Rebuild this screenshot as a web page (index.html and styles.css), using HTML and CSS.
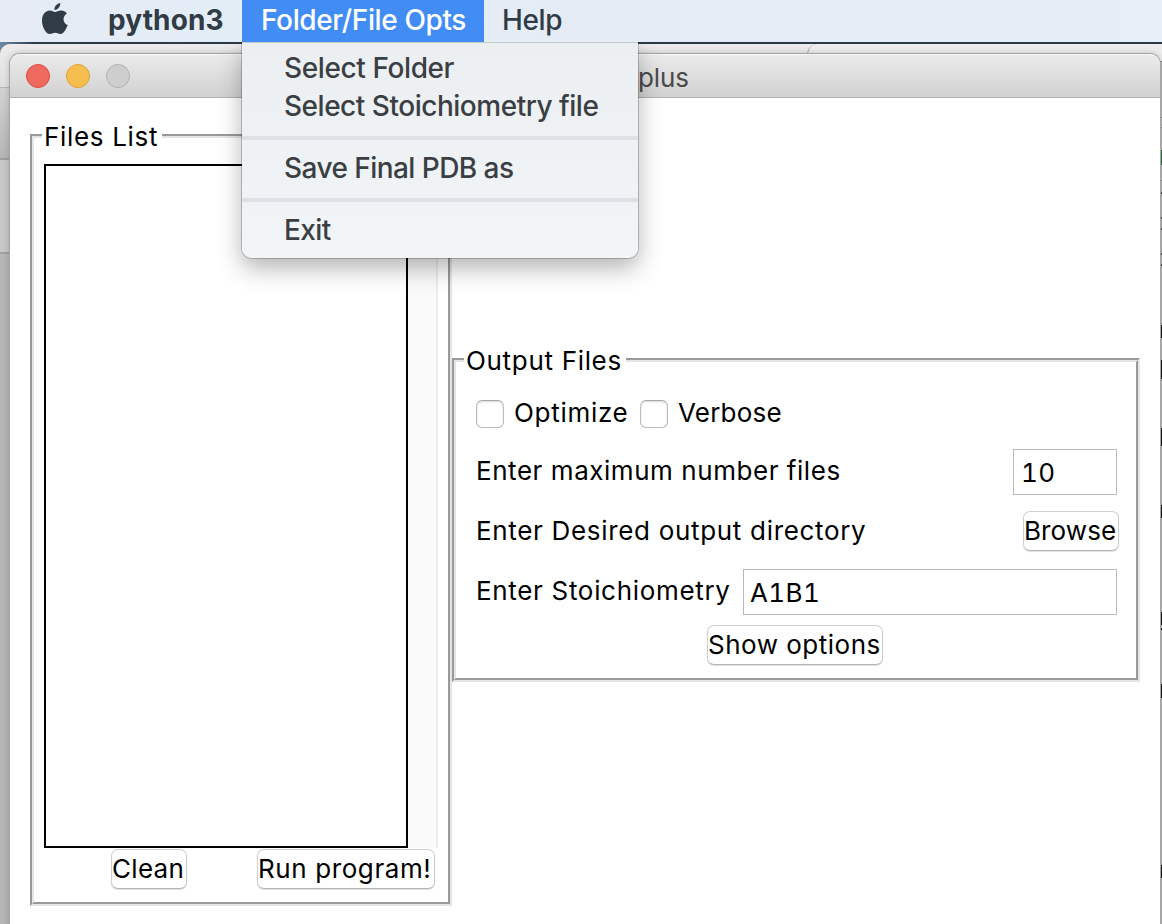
FILE: index.html
```
<!DOCTYPE html>
<html lang="en">
<head>
<meta charset="utf-8">
<title>plus</title>
<link rel="stylesheet" href="styles.css">
</head>
<body>
<div class="desktop">
  <header class="menubar">
    <svg class="apple" viewBox="0 0 26 32" width="26" height="32"><path d="M18.3 0C18.6 3.6 15.6 7 12.4 7 12.1 3.5 15.2.3 18.3 0ZM13 9C14.500 9 16.300 7.400 19 7.400 21.500 7.400 23.600 8.600 24.900 10.500 20 13.400 20.700 20.200 25.700 22.100 24.500 25.500 21.700 31 18.700 31 16.500 31 15.700 29.700 13.200 29.700 10.600 29.700 9.700 31 7.700 31 4 31 0 24.300 0 17.700 0 11 4 7.600 7.700 7.600 10 7.600 11.800 9 13 9Z"/></svg>
    <span class="menu-title app-name">python3</span>
    <span class="menu-title open">Folder/File Opts</span>
    <span class="menu-title">Help</span>
  </header>
  <div class="back-window back-left"><i class="toolbar"></i><i class="tabs"></i><i class="ruler"></i></div>
  <div class="back-window back-right">
    <svg class="edge" width="2" height="880" viewBox="0 44 2 880">
      <path fill="#b9b9b9" d="M0 61h2v863H0z"/>
      <path fill="#777" d="M0 61h2v1H0zM0 117h2v1H0zM0 127h2v1H0zM0 180h2v1H0z"/>
      <path fill="#23703f" d="M0 150h2v15H0z"/>
      <path fill="#444" d="M0 192h2v2H0zM1 217h1v2H1zM0 228h2v2H0zM1 253h1v2H1zM0 264h2v2H0z"/>
      <path fill="#16161d" d="M0 325h2v13H0zM0 360h2v19H0zM0 428h2v18H0zM0 505h2v13H0zM0 612h2v13H0zM0 628h2v2H0zM0 684h2v14H0zM0 865h2v13H0z"/>
    </svg>
  </div>
  <main class="window">
    <div class="titlebar"><i class="light close"></i><i class="light minimize"></i><i class="light zoom"></i><span class="title">plus</span></div>
    <div class="content">
      <section class="group files">
        <h2 class="legend">Files List</h2>
        <div class="group-body">
          <div class="list-row"><div class="listbox"></div><div class="scrollbar"></div></div>
          <div class="actions"><button class="clean">Clean</button><button class="run">Run program!</button></div>
        </div>
      </section>
      <section class="group output">
        <h2 class="legend">Output Files</h2>
        <div class="group-body">
          <div class="checks"><i class="box"></i><span class="opt">Optimize</span><i class="box"></i><span class="ver">Verbose</span></div>
          <div class="field"><span class="max-label">Enter maximum number files</span><span class="entry small">10</span></div>
          <div class="field"><span>Enter Desired output directory</span><button class="browse">Browse</button></div>
          <div class="field"><span>Enter Stoichiometry</span><span class="entry large">A1B1</span></div>
          <div class="show-row"><button class="show">Show options</button></div>
        </div>
      </section>
    </div>
  </main>
  <nav class="dropdown">
    <div class="item">Select Folder</div>
    <div class="item stoich">Select Stoichiometry file</div>
    <hr>
    <div class="item save">Save Final PDB as</div>
    <hr>
    <div class="item exit">Exit</div>
  </nav>
</div>
</body>
</html>
```
FILE: styles.css
```
* { box-sizing: border-box; }
body { margin: 0; font-family: Inter, "Liberation Sans", sans-serif; font-size: 26px; font-weight: 430; color: #000; }
.desktop { position: relative; width: 1162px; height: 924px; overflow: hidden; background: linear-gradient(90deg, #6f8aa6, #2b3a49 3%); }
.menubar { display: flex; height: 42px; font-size: 28px; line-height: 41px; letter-spacing: -.38px; font-weight: 450; color: #303b45; background: linear-gradient(90deg, #e6ebf6, #e2eef7 26%, #e5ecf6 50%, #e6eef8); }
.apple { margin: 3px 0 0 42px; fill: #303b45; }
.menu-title { padding: 0 18px; white-space: nowrap; }
.app-name { width: 174px; padding-left: 40px; font-weight: 700; letter-spacing: .1px; }
.open { width: 242px; padding-left: 19px; color: #fff; background: #428df5; }
.back-window { position: absolute; overflow: hidden; }
.back-left { left: 0; top: 44px; width: 830px; height: 880px; border-top-left-radius: 10px; background: #b7b7b7; }
.back-left i { display: block; border-bottom: 2px solid #a0a0a0; }
.back-left .toolbar { height: 44px; border-bottom: 1px solid #b5b5b5; background: linear-gradient(#ececec, #e0e0e0); }
.tabs { height: 72px; background: linear-gradient(#d2d2d2, #b6b6b6); }
.ruler { height: 94px; background: #c8c8c8; }
.back-right { left: 807px; top: 44px; width: 355px; height: 880px; border-top-left-radius: 10px; border-left: 1px solid #a5a5a5; background: #ededed; }
.edge { display: block; margin-left: auto; }
.window { position: absolute; left: 10px; top: 54px; width: 1150px; height: 880px; border-radius: 10px 10px 0 0; background: #fff; box-shadow: 0 0 0 1px #a6a6a6, 0 0 7px rgba(0,0,0,.25); }
.titlebar { display: flex; align-items: center; height: 44px; padding-left: 16px; gap: 16px; border-bottom: 1px solid #b1b1b1; border-top: 1px solid #f6f6f6; border-radius: 10px 10px 0 0; background: linear-gradient(#ebebeb, #d1d1d1); color: #4a4a4a; white-space: nowrap; }
.light { width: 24px; height: 24px; border-radius: 50%; border: 1px solid #dc4b44; background: #ee6a5f; }
.minimize { border-color: #dea03a; background: #f6be4f; }
.zoom { border-color: #b1b1b1; background: #cecece; }
.title { margin: 2px 0 0 492px; letter-spacing: -.1px; }
.content { display: flex; align-items: flex-start; padding-left: 20px; letter-spacing: .68px; }
.group { position: relative; border: 2px solid; border-color: #999 #e5e5e5 #e5e5e5 #999; }
.group-body { height: 100%; border: 2px solid; border-color: #e5e5e5 #999 #999 #e5e5e5; }
.legend { position: absolute; left: 10px; top: -14px; height: 30px; margin: 0; padding-left: 2px; font-size: 26px; font-weight: inherit; line-height: 30px; background: #fff; white-space: nowrap; }
.files { width: 422px; height: 772px; margin-top: 36px; }
.files .legend { width: 120px; }
.files .group-body { padding: 26px 10px 0; }
.output { width: 688px; height: 324px; margin-top: 260px; }
.output .legend { width: 162px; }
.output .group-body { padding: 0 17px 0 20px; }
.list-row { display: flex; height: 684px; }
.listbox { width: 364px; border: 2px solid #000; }
.scrollbar { width: 30px; background: #fafafa; border-right: 2px solid #ececec; }
.actions { display: flex; padding: 1px 3px 0 67px; justify-content: space-between; }
button { height: 40px; padding: 0; border: 1px solid #cfcfcf; border-bottom-color: #b5b5b5; border-radius: 7px; background: #fff; box-shadow: 0 1px 1px rgba(0,0,0,.12); font: inherit; line-height: 38px; letter-spacing: .5px; text-align: left; white-space: nowrap; color: #000; }
.clean { width: 76px; letter-spacing: .3px; }
.run { width: 178px; letter-spacing: .6px; }
.browse { width: 96px; letter-spacing: .1px; margin-bottom: 2px; }
.show { width: 176px; }
.checks { display: flex; align-items: flex-start; height: 80px; padding-top: 38px; line-height: 26px; }
.box { width: 28px; height: 28px; border: 1px solid #bdbdbd; border-top-color: #a8a8a8; border-radius: 6px; box-shadow: inset 0 1px 2px rgba(0,0,0,.15); }
.opt { width: 126px; margin-left: 10px; letter-spacing: .7px; }
.ver { margin-left: 10px; letter-spacing: .2px; }
.field { display: flex; align-items: center; justify-content: space-between; height: 60px; line-height: 32px; white-space: nowrap; }
.field > span:first-child { margin-bottom: 2px; }
.max-label { letter-spacing: .55px; }
.entry { height: 46px; padding-left: 7px; margin-right: 2px; border: 1px solid #b9b9b9; line-height: 46px; font-variant-numeric: tabular-nums; letter-spacing: .4px; }
.small { width: 104px; }
.large { width: 374px; padding-left: 6px; }
.show-row { padding: 3px 0 0 231px; }
.dropdown { position: absolute; left: 242px; top: 42px; width: 396px; height: 216px; padding: 7px 0; border-top: 1px solid #c4c8cb; border-radius: 0 0 10px 10px; background: linear-gradient(#ebeff2, #f1f5f8); color: #3b3f43; font-size: 28px; font-weight: 450; letter-spacing: -.4px; box-shadow: 0 0 0 1px rgba(0,0,0,.2), 0 10px 24px rgba(0,0,0,.3); clip-path: inset(0 -50px -50px -50px); }
.item { height: 38px; padding-left: 42px; line-height: 36px; white-space: nowrap; }
.stoich { letter-spacing: -.48px; }
.save { letter-spacing: -.55px; }
.exit { letter-spacing: -.6px; }
.dropdown hr { height: 4px; margin: 10px 0; border: 0; background: #dde1e5; }
```
